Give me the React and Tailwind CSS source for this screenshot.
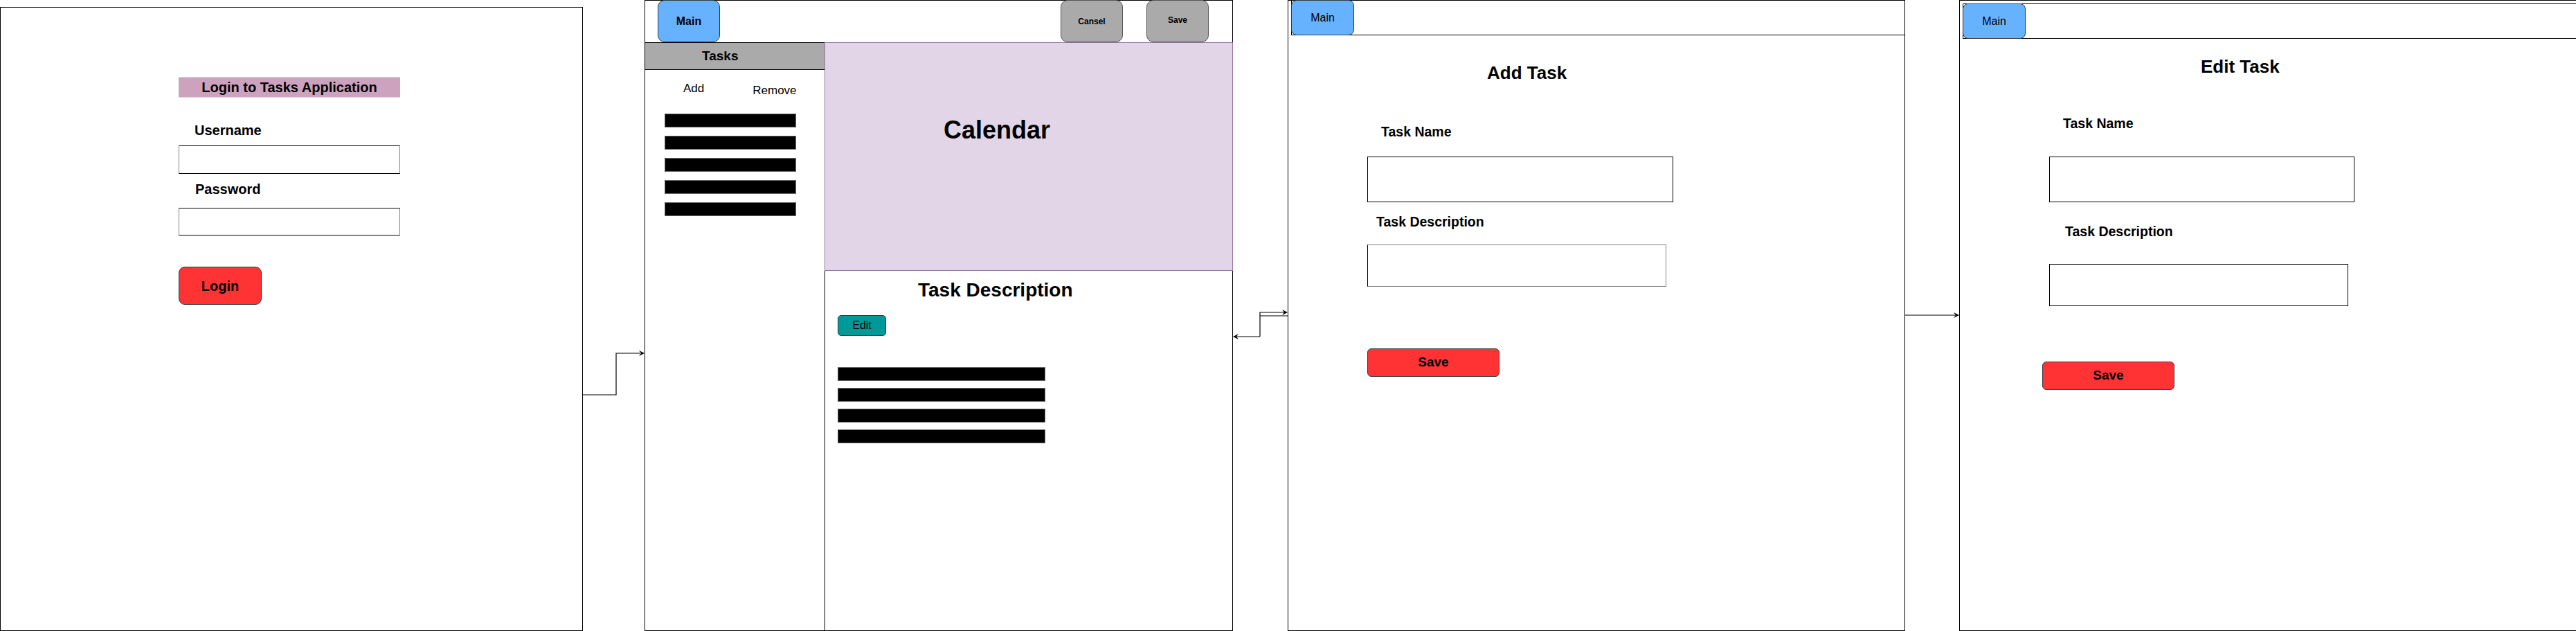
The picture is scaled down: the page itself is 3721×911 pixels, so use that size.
import React from 'react';

const font = { fontFamily: '"Liberation Sans", Arial, sans-serif' };

function Bar({ w }) {
  return <div className={`${w} h-[20px] bg-black border border-[#666666]`} />;
}

function Arrow({ x, y, dir = 1 }) {
  // classic draw.io arrow head, tip at (x, y)
  const b = x - 8 * dir;
  const n = x - 5 * dir;
  return <polygon points={`${x},${y} ${b},${y - 4} ${n},${y} ${b},${y + 4}`} fill="#000" />;
}

function Connectors() {
  return (
    <svg className="absolute inset-0 pointer-events-none" width="3721" height="911">
      <g fill="none" stroke="#000" strokeWidth="1.2">
        <path d="M842 570 H890 V510 H925" />
        <path d="M1820 486 V451 H1855" />
        <path d="M1860 456 H1820" />
        <path d="M1820 486 H1786" />
        <path d="M2751 455 H2825" />
      </g>
      <Arrow x={931} y={510} />
      <Arrow x={1860} y={451} />
      <Arrow x={1781} y={486} dir={-1} />
      <Arrow x={2830} y={455} />
    </svg>
  );
}

function LoginFrame() {
  return (
    <div className="mt-[10px] w-[842px] h-[901px] shrink-0 border border-black flex flex-col pl-[257px]">
      <div className="mt-[100px] w-[320px] h-[30px] bg-[#cda2be] border-y border-[#e6d0de] flex items-center justify-center text-[20px] font-bold">
        Login to Tasks Application
      </div>
      <div className="mt-[37px] ml-[23px] text-[20px] font-bold leading-none">Username</div>
      <div className="mt-[12px] w-[320px] h-[41px] border border-y-black border-x-[#808080]" />
      <div className="mt-[12px] ml-[24px] text-[20px] font-bold leading-none">Password</div>
      <div className="mt-[17px] w-[320px] h-[40px] border border-y-black border-x-[#808080]" />
      <button className="mt-[45px] w-[120px] h-[55px] bg-[#ff3333] border border-[#36393d] rounded-[9px] text-[20px] font-bold">
        Login
      </button>
    </div>
  );
}

function MainFrame() {
  return (
    <div className="ml-[89px] w-[850px] h-[911px] shrink-0 border border-black flex flex-col">
      <div className="h-[60px] flex items-start">
        <button className="ml-[18px] -mt-px w-[90px] h-[61px] bg-[#66b2ff] border border-[#36393d] rounded-[10px] text-[16px] font-bold">
          Main
        </button>
        <button className="ml-auto -mt-px w-[90px] h-[61px] bg-[#aaaaaa] border border-[#555555] rounded-[10px] text-[12px] font-bold">
          Cansel
        </button>
        <button className="ml-[34px] mr-[34px] -mt-px w-[90px] h-[61px] pb-[3px] bg-[#aaaaaa] border border-[#555555] rounded-[10px] text-[12px] font-bold">
          Save
        </button>
      </div>
      <div className="flex flex-1">
        <div className="w-[259px] flex flex-col">
          <div className="h-[40px] bg-[#aaaaaa] border-y border-black flex items-center pl-[82px] text-[19px] font-bold">
            Tasks
          </div>
          <div className="mt-[18px] flex items-start text-[17px] leading-none">
            <span className="ml-[55px]">Add</span>
            <span className="ml-[70px] mt-[3px]">Remove</span>
          </div>
          <div className="mt-[25px] ml-[28px] flex flex-col gap-[12px]">
            <Bar w="w-[190px]" />
            <Bar w="w-[190px]" />
            <Bar w="w-[190px]" />
            <Bar w="w-[190px]" />
            <Bar w="w-[190px]" />
          </div>
        </div>
        <div className="flex-1 border-l border-black flex flex-col">
          <div className="-ml-px -mr-px h-[330px] bg-[#e1d5e7] border border-[#9673a6] pl-[171px] pt-[108px]">
            <div className="text-[36px] font-bold leading-none">Calendar</div>
          </div>
          <div className="mt-[14px] ml-[134px] text-[28px] font-bold leading-none">Task Description</div>
          <button className="mt-[22px] ml-[18px] w-[70px] h-[30px] bg-[#009999] border border-[#36393d] rounded-[5px] text-[16px]">
            Edit
          </button>
          <div className="mt-[45px] ml-[18px] flex flex-col gap-[10px]">
            <Bar w="w-[300px]" />
            <Bar w="w-[300px]" />
            <Bar w="w-[300px]" />
            <Bar w="w-[300px]" />
          </div>
        </div>
      </div>
    </div>
  );
}

function AddTaskFrame() {
  return (
    <div className="ml-[79px] w-[892px] h-[911px] shrink-0 border border-black flex flex-col">
      <div className="-mt-px ml-[4px] h-[51px] border-l border-b border-black flex items-start">
        <button className="-ml-px w-[91px] h-[51px] bg-[#66b2ff] border border-[#36393d] rounded-[8px] text-[16px]">
          Main
        </button>
      </div>
      <div className="mt-[41px] ml-[287px] text-[26px] font-bold leading-none">Add Task</div>
      <div className="mt-[63px] ml-[134px] text-[19.5px] font-bold leading-none">Task Name</div>
      <div className="mt-[25px] ml-[114px] w-[442px] h-[66px] border border-black" />
      <div className="mt-[19px] ml-[127px] text-[19.5px] font-bold leading-none">Task Description</div>
      <div className="mt-[23px] ml-[114px] w-[432px] h-[61px] border border-[#808080] border-l-black" />
      <button className="mt-[89px] ml-[114px] w-[191px] h-[41px] bg-[#ff3333] border border-[#36393d] rounded-[6px] text-[19px] font-bold">
        Save
      </button>
    </div>
  );
}

function EditTaskFrame() {
  return (
    <div className="ml-[78px] w-[892px] h-[911px] shrink-0 border border-black flex flex-col">
      <div className="mt-[4px] ml-[4px] h-[51px] border-l border-t border-b border-black flex items-start">
        <button className="-ml-px -mt-px w-[91px] h-[51px] bg-[#66b2ff] border border-[#36393d] rounded-[8px] text-[16px]">
          Main
        </button>
      </div>
      <div className="mt-[27px] ml-[348px] text-[26px] font-bold leading-none">Edit Task</div>
      <div className="mt-[60px] ml-[149px] text-[19.5px] font-bold leading-none">Task Name</div>
      <div className="mt-[37px] ml-[129px] w-[441px] h-[66px] border border-black" />
      <div className="mt-[33px] ml-[152px] text-[19.5px] font-bold leading-none">Task Description</div>
      <div className="mt-[37px] ml-[129px] w-[432px] h-[61px] border border-black" />
      <button className="mt-[80px] ml-[119px] w-[191px] h-[41px] bg-[#ff3333] border border-[#36393d] rounded-[6px] text-[19px] font-bold">
        Save
      </button>
    </div>
  );
}

export default function App() {
  return (
    <div className="relative w-[3721px] h-[911px] overflow-hidden bg-white text-black" style={font}>
      <div className="flex items-start">
        <LoginFrame />
        <MainFrame />
        <AddTaskFrame />
        <EditTaskFrame />
      </div>
      <Connectors />
    </div>
  );
}
